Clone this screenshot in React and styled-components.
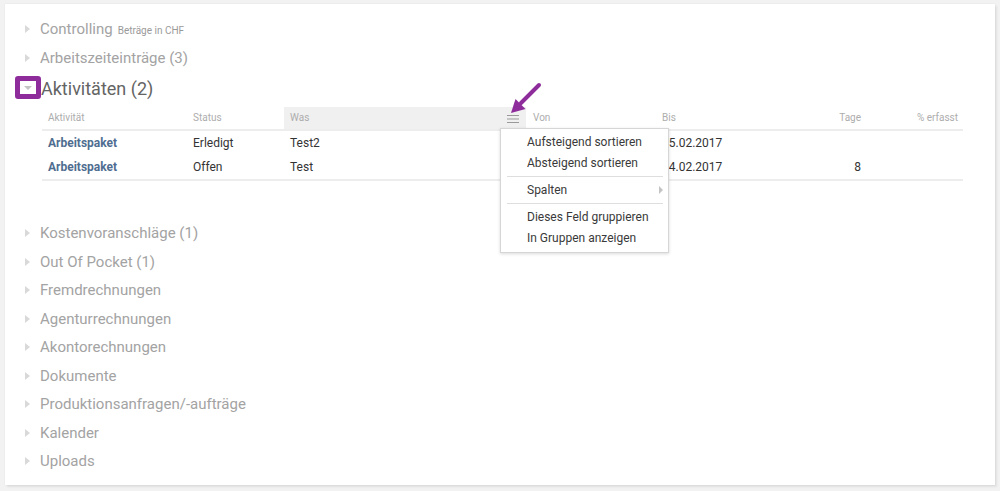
import styled, { createGlobalStyle } from 'styled-components'

const GlobalStyle = createGlobalStyle`
    body {
        margin: 0;
        background: #f2f2f2;
        font-family: Roboto, "Helvetica Neue", Arial, sans-serif;
    }
`

const columns = [
    { key: 'aktivitaet', label: 'Aktivität', width: 145 },
    { key: 'status', label: 'Status', width: 97 },
    { key: 'was', label: 'Was', width: 243, active: true },
    { key: 'von', label: 'Von', width: 129 },
    { key: 'bis', label: 'Bis', width: 130 },
    { key: 'tage', label: 'Tage', width: 80, right: true },
    { key: 'erfasst', label: '% erfasst', width: 97, right: true },
]

// "Von" lies under the open column menu, so it stays empty here
const rows = [
    { aktivitaet: 'Arbeitspaket', status: 'Erledigt', was: 'Test2', von: '', bis: '15.02.2017', tage: '', erfasst: '' },
    { aktivitaet: 'Arbeitspaket', status: 'Offen', was: 'Test', von: '', bis: '24.02.2017', tage: '8', erfasst: '' },
]

const lowerSections = [
    'Kostenvoranschläge (1)',
    'Out Of Pocket (1)',
    'Fremdrechnungen',
    'Agenturrechnungen',
    'Akontorechnungen',
    'Dokumente',
    'Produktionsanfragen/-aufträge',
    'Kalender',
    'Uploads',
]

const gridTemplate = columns.map(c => `${c.width}px`).join(' ')

function MenuIcon() {
    return (
        <svg width="12" height="10" viewBox="0 0 12 10">
            <path d="M0 1.5h12M0 5h12M0 8.5h12" stroke="#9a9a9a" strokeWidth="1" />
        </svg>
    )
}

function PurpleArrow() {
    return (
        <svg width="36" height="34" viewBox="0 0 36 34">
            <path d="M32 3 L14 21" stroke="#8e2c9c" strokeWidth="4" strokeLinecap="round" />
            <polygon points="4,31 8.5,17 18.5,27" fill="#8e2c9c" />
        </svg>
    )
}

function App() {
    return (
        <>
            <GlobalStyle />
            <Page>
                <Card>
                    <SectionRow>
                        <CollapsedToggle />
                        <SectionTitle>Controlling</SectionTitle>
                        <SectionNote>Beträge in CHF</SectionNote>
                    </SectionRow>
                    <SectionRow>
                        <CollapsedToggle />
                        <SectionTitle>Arbeitszeiteinträge (3)</SectionTitle>
                    </SectionRow>

                    <OpenRow>
                        <ToggleSlot>
                            <Highlight>
                                <DownTriangle />
                            </Highlight>
                        </ToggleSlot>
                        <OpenTitle>Aktivitäten (2)</OpenTitle>
                    </OpenRow>

                    <GridWrap>
                        <Grid>
                            {columns.map(c => (
                                <HeadCell key={c.key} $active={c.active} $right={c.right}>
                                    {c.label}
                                    {c.active && (
                                        <>
                                            <HeadTrigger><MenuIcon /></HeadTrigger>
                                            <ArrowMark><PurpleArrow /></ArrowMark>
                                        </>
                                    )}
                                </HeadCell>
                            ))}
                            {rows.map((r, i) => columns.map(c => (
                                <BodyCell key={`${i}-${c.key}`} $right={c.right} $bold={c.key === 'aktivitaet'} $last={i === rows.length - 1}>
                                    {r[c.key]}
                                </BodyCell>
                            )))}
                        </Grid>

                        <Menu>
                            <MenuItem>Aufsteigend sortieren</MenuItem>
                            <MenuItem>Absteigend sortieren</MenuItem>
                            <MenuSeparator />
                            <MenuItem>Spalten<SubArrow /></MenuItem>
                            <MenuSeparator />
                            <MenuItem>Dieses Feld gruppieren</MenuItem>
                            <MenuItem>In Gruppen anzeigen</MenuItem>
                        </Menu>
                    </GridWrap>

                    <LowerList>
                        {lowerSections.map(s => (
                            <SectionRow key={s}>
                                <CollapsedToggle />
                                <SectionTitle>{s}</SectionTitle>
                            </SectionRow>
                        ))}
                    </LowerList>
                </Card>
            </Page>
        </>
    )
}

export default App

const Page = styled.div`
    padding: 4px 5px 6px 5px;
`

const Card = styled.div`
    background: #fff;
    height: 481px;
    box-sizing: border-box;
    padding: 11px 0 0 20px;
    box-shadow: 0 0 1px rgba(0, 0, 0, 0.12), 2px 2px 2px rgba(0, 0, 0, 0.07);
    display: flex;
    flex-direction: column;
`

const SectionRow = styled.div`
    display: flex;
    align-items: center;
    height: 28.5px;
`

const CollapsedToggle = styled.span`
    width: 0;
    height: 0;
    border-top: 4px solid transparent;
    border-bottom: 4px solid transparent;
    border-left: 5px solid #d9d9d9;
    margin-right: 10px;
`

const SectionTitle = styled.span`
    font-size: 15px;
    color: #a3a3a3;
`

const SectionNote = styled.span`
    font-size: 10px;
    color: #9a9a9a;
    margin-left: 5px;
    margin-top: 2px;
`

const OpenRow = styled.div`
    display: flex;
    align-items: center;
    height: 32px;
`

const ToggleSlot = styled.span`
    position: relative;
    width: 5px;
    height: 8px;
    margin-right: 11px;
`

const Highlight = styled.span`
    position: absolute;
    left: -10px;
    top: -8px;
    width: 16px;
    height: 13px;
    border: 5px solid #8e2c9c;
    border-radius: 3px;
    background: #fff;
    display: flex;
    align-items: center;
    justify-content: center;
`

const DownTriangle = styled.span`
    width: 0;
    height: 0;
    border-left: 4px solid transparent;
    border-right: 4px solid transparent;
    border-top: 4px solid #c4c4c4;
`

const OpenTitle = styled.span`
    font-size: 18px;
    color: #646464;
`

const GridWrap = styled.div`
    position: relative;
    margin: 3px 0 0 17px;
    width: 921px;
`

const Grid = styled.div`
    display: grid;
    grid-template-columns: ${gridTemplate};
`

const HeadCell = styled.div`
    position: relative;
    height: 22px;
    line-height: 22px;
    padding: 0 5px 0 6px;
    font-size: 10px;
    color: #adadad;
    text-align: ${p => (p.$right ? 'right' : 'left')};
    background: ${p => (p.$active ? '#f0f0f0' : '#fff')};
    border-bottom: 2px solid #ededed;
    box-shadow: inset -1px 0 0 #fff;
    white-space: nowrap;
`

const HeadTrigger = styled.span`
    position: absolute;
    right: 8px;
    top: 7px;
    display: flex;
`

const ArrowMark = styled.span`
    position: absolute;
    right: -16px;
    top: -25px;
    display: flex;
    z-index: 3;
`

const BodyCell = styled.div`
    height: 24px;
    line-height: 24px;
    padding: 0 5px 0 6px;
    font-size: 12px;
    color: ${p => (p.$bold ? '#4f6d90' : '#333')};
    font-weight: ${p => (p.$bold ? 700 : 400)};
    text-align: ${p => (p.$right ? 'right' : 'left')};
    border-bottom: ${p => (p.$last ? '2px solid #ededed' : '0')};
    white-space: nowrap;
`

const Menu = styled.div`
    position: absolute;
    left: 458px;
    top: 21px;
    width: 167px;
    padding: 3px 0;
    background: #fff;
    border: 1px solid #d6d6d6;
    box-shadow: 0 1px 3px rgba(0, 0, 0, 0.15);
    z-index: 2;
`

const MenuItem = styled.div`
    position: relative;
    height: 21px;
    line-height: 21px;
    padding-left: 26px;
    font-size: 12px;
    color: #3a3a3a;
`

const SubArrow = styled.span`
    position: absolute;
    right: 5px;
    top: 6px;
    width: 0;
    height: 0;
    border-top: 4px solid transparent;
    border-bottom: 4px solid transparent;
    border-left: 4px solid #c4c4c4;
`

const MenuSeparator = styled.div`
    height: 1px;
    background: #dedede;
    margin: 2px 5px 3px 6px;
`

const LowerList = styled.div`
    display: flex;
    flex-direction: column;
    margin-top: 38px;
`
